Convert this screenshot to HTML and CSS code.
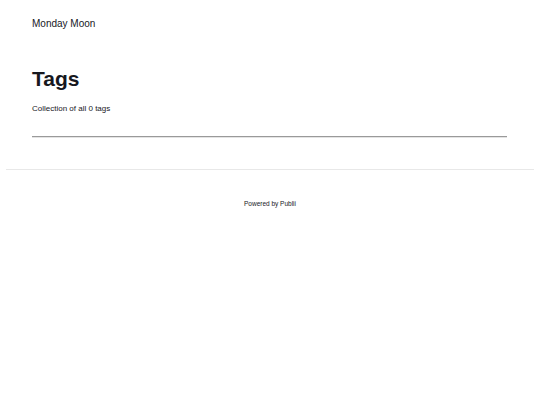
FILE: index.html
```html
<!DOCTYPE html>
<html lang="en">
<head>
    <meta charset="UTF-8">
    <meta name="viewport" content="width=device-width, initial-scale=1.0">
    <title>Tags - Monday Moon</title>
    <link rel="stylesheet" href="styles.css">
</head>
<body>
    <header class="site-header">
        <a class="logo" href="#">Monday Moon</a>
    </header>

    <main class="content">
        <h1>Tags</h1>
        <p class="desc">Collection of all 0 tags</p>
        <hr class="divider">
    </main>

    <footer class="site-footer">
        <p>Powered by Publii</p>
    </footer>
</body>
</html>
```

FILE: styles.css
```css
body {
    font-family: "Liberation Sans", Arial, sans-serif;
    margin: 0;
    background-color: #ffffff;
    color: #17181e;
}
.site-header {
    padding: 13px 32px 0;
    height: 34px;
}
.logo {
    font-size: 10px;
    line-height: 12px;
    color: #17181e;
    text-decoration: none;
}
.content {
    padding: 0 33px 0 32px;
}
h1 {
    font-size: 21px;
    line-height: 24px;
    margin: 20px 0 0;
}
.desc {
    font-size: 8px;
    line-height: 10px;
    margin: 13px 0 0;
}
.divider {
    margin: 22px 0 0;
    border: none;
    border-top: 1px solid #9a9a9a;
    border-bottom: 1px solid #e4e4e4;
    height: 0;
}
.site-footer {
    margin: 31px 6px 0;
    border-top: 1px solid #e8e8e8;
    text-align: center;
}
.site-footer p {
    font-size: 6.5px;
    line-height: 8px;
    margin: 30px 0 0;
}
```
